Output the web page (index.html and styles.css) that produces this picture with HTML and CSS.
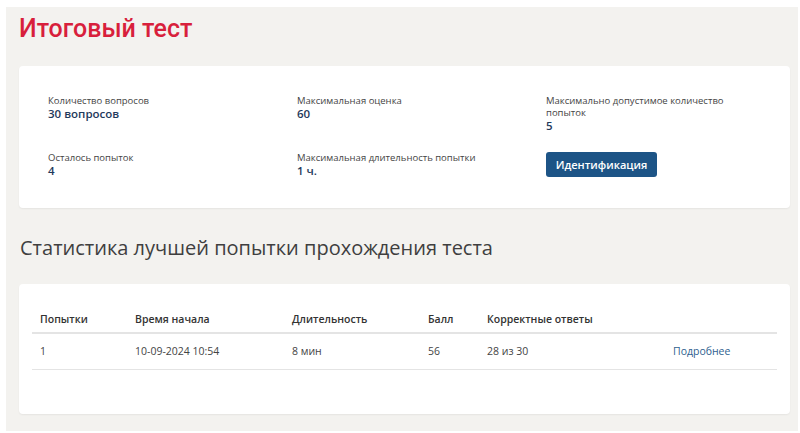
FILE: index.html
```html
<!DOCTYPE html>
<html lang="ru">
<head>
  <meta charset="UTF-8">
  <meta name="viewport" content="width=device-width, initial-scale=1.0">
  <title>Итоговый тест</title>
  <link rel="stylesheet" href="styles.css">
</head>
<body>
  <div class="test">
    <!-- Header -->
    <h1 class="test__title">Итоговый тест</h1>

    <!-- Summary -->
    <section class="test__card test__summary">
      <div class="test__item">
        <div class="test__label">Количество вопросов</div>
        <div class="test__value">30 вопросов</div>
      </div>
      <div class="test__item">
        <div class="test__label">Максимальная оценка</div>
        <div class="test__value">60</div>
      </div>
      <div class="test__item">
        <div class="test__label">Максимально допустимое количество попыток</div>
        <div class="test__value">5</div>
      </div>
      <div class="test__item">
        <div class="test__label">Осталось попыток</div>
        <div class="test__value">4</div>
      </div>
      <div class="test__item">
        <div class="test__label">Максимальная длительность попытки</div>
        <div class="test__value">1 ч.</div>
      </div>
      <div class="test__item">
        <button class="test__button">Идентификация</button>
      </div>
    </section>

    <!-- Best attempt -->
    <h2 class="test__subtitle">Статистика лучшей попытки прохождения теста</h2>
    <section class="test__card test__stats">
      <table class="test__table">
        <colgroup>
          <col style="width: 95px">
          <col style="width: 157px">
          <col style="width: 136px">
          <col style="width: 59px">
          <col style="width: 186px">
          <col>
        </colgroup>
        <thead>
          <tr>
            <th>Попытки</th>
            <th>Время начала</th>
            <th>Длительность</th>
            <th>Балл</th>
            <th>Корректные ответы</th>
            <th></th>
          </tr>
        </thead>
        <tbody>
          <tr>
            <td>1</td>
            <td>10-09-2024 10:54</td>
            <td>8 мин</td>
            <td>56</td>
            <td>28 из 30</td>
            <td><a class="test__link" href="#">Подробнее</a></td>
          </tr>
        </tbody>
      </table>
    </section>
  </div>
</body>
</html>
```

FILE: styles.css
```css
:root {
  --page-bg: #f3f2ef;
  --title-color: #d81f3c;
  --value-color: #1f3a5c;
  --button-color: #1d5486;
  --text-color: #444;
  --line-color: #e4e4e4;
}
* { box-sizing: border-box; margin: 0; padding: 0; }
body {
  font-family: "Open Sans", Arial, sans-serif;
  color: var(--text-color);
  background: #fff;
}
.test {
  margin: 7px 2px 2px 6px;
  height: 424px;
  padding: 0 8px 0 13px;
  background: var(--page-bg);
}
.test__title {
  font-family: Roboto, Arial, sans-serif;
  font-weight: 500;
  font-size: 25px;
  line-height: 30px;
  padding-top: 7px;
  margin-bottom: 22px;
  color: var(--title-color);
}
.test__card {
  background: #fff;
  border-radius: 4px;
  box-shadow: 0 1px 2px rgba(0, 0, 0, 0.06);
}
.test__summary {
  display: grid;
  grid-template-columns: 249px 249px 1fr;
  align-content: start;
  row-gap: 20px;
  height: 142px;
  padding: 29px 20px 0 29px;
}
.test__label {
  font-size: 9.5px;
  line-height: 12px;
  color: #444;
  max-width: 210px;
}
.test__value {
  font-size: 11.5px;
  line-height: 13px;
  font-weight: 600;
  color: var(--value-color);
}
.test__button {
  font-family: "Open Sans", Arial, sans-serif;
  font-size: 11px;
  font-weight: 600;
  color: #fff;
  background: var(--button-color);
  border: none;
  border-radius: 3px;
  width: 111px;
  height: 25px;
  cursor: pointer;
}
.test__subtitle {
  font-size: 20px;
  font-weight: 400;
  line-height: 28px;
  color: #3f3f3f;
  margin: 26px 0 22px 1px;
}
.test__stats {
  height: 130px;
  padding: 21px 13px 0 13px;
}
.test__table {
  width: 100%;
  border-collapse: collapse;
  font-size: 10.5px;
  table-layout: fixed;
}
.test__table th {
  text-align: left;
  font-weight: 600;
  color: #333;
  height: 28px;
  padding: 0 8px;
  border-bottom: 2px solid var(--line-color);
}
.test__table td {
  height: 36px;
  padding: 0 8px;
  border-bottom: 1px solid var(--line-color);
}
.test__link {
  color: #2f5f8f;
  text-decoration: none;
}
```
